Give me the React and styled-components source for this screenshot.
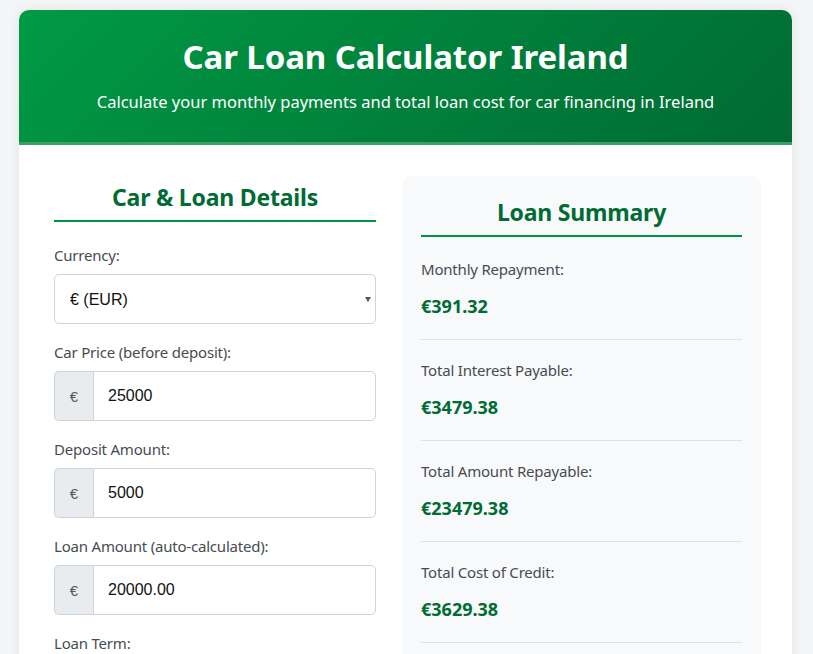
import styled, { createGlobalStyle } from "styled-components";

const Global = createGlobalStyle`
    body {
        margin: 0;
        background: #f4f5f6;
        font-family: "Noto Sans", "Open Sans", sans-serif;
    }
`;

const Page = styled.div`
    padding: 10px 21px 0 19px;
`;

const Card = styled.div`
    background: #fff;
    border-radius: 10px;
    box-shadow: 0 0 12px rgba(0, 0, 0, 0.08);
    overflow: hidden;
`;

const Header = styled.header`
    background: linear-gradient(135deg, #009a44 0%, #006a33 100%);
    color: #fff;
    text-align: center;
    padding: 25px 20px 28px;
    border-bottom: 3px solid #3d9e66;
`;

const Title = styled.h1`
    margin: 0;
    font-size: 33px;
    font-weight: 700;
    letter-spacing: -0.1px;
    line-height: 44px;
`;

const Subtitle = styled.p`
    margin: 11px 0 0;
    font-size: 16.5px;
    line-height: 24px;
`;

const Body = styled.div`
    display: grid;
    grid-template-columns: 322px 359px;
    column-gap: 26px;
    padding: 31px 31px 40px 35px;
    align-items: start;
`;

const Column = styled.section`
    padding-top: 5px;
`;

const Summary = styled.section`
    background: #f8f9fa;
    border-radius: 10px;
    padding: 20px 19px;
`;

const SectionTitle = styled.h2`
    margin: 0 0 ${p => p.gap}px;
    padding-bottom: 7px;
    border-bottom: 2px solid #009245;
    color: #006b35;
    font-size: 23px;
    font-weight: 700;
    text-align: center;
    line-height: 32px;
    letter-spacing: -0.2px;
`;

const Field = styled.div`
    margin-bottom: 18px;
`;

const Label = styled.label`
    display: block;
    color: #474c52;
    font-size: 15px;
    line-height: 20px;
    margin-bottom: 9px;
    letter-spacing: -0.2px;
`;

const SelectWrap = styled.div`
    position: relative;
    &::after {
        content: "";
        position: absolute;
        right: 5px;
        top: 23px;
        border-left: 3.5px solid transparent;
        border-right: 3.5px solid transparent;
        border-top: 5px solid #555;
        pointer-events: none;
    }
`;

const Select = styled.select`
    appearance: none;
    width: 100%;
    height: 50px;
    border: 1px solid #cfd3d8;
    border-radius: 5px;
    background: #fff;
    padding: 0 15px;
    font-family: "Liberation Sans", Arial, sans-serif;
    font-size: 16px;
    color: #111;
`;

const Group = styled.div`
    display: flex;
    height: 50px;
`;

const Prefix = styled.span`
    width: 38px;
    flex: none;
    display: flex;
    align-items: center;
    justify-content: center;
    background: #e9ecef;
    border: 1px solid #cfd3d8;
    border-right: none;
    border-radius: 5px 0 0 5px;
    color: #555;
    font-family: "Liberation Sans", Arial, sans-serif;
    font-size: 15px;
`;

const Input = styled.input`
    flex: 1;
    min-width: 0;
    border: 1px solid #cfd3d8;
    border-radius: 0 5px 5px 0;
    padding: 0 14px;
    font-family: "Liberation Sans", Arial, sans-serif;
    font-size: 16px;
    color: #111;
    background: #fff;
`;

const Item = styled.div`
    padding: 20px 0 21px;
    border-bottom: 1px solid #dee2e6;
    &:first-of-type { padding-top: 0; }
`;

const ItemLabel = styled.div`
    color: #474c52;
    font-size: 15px;
    line-height: 20px;
    letter-spacing: -0.2px;
`;

const ItemValue = styled.div`
    margin-top: 15px;
    color: #006b35;
    font-size: 18px;
    font-weight: 700;
    line-height: 24px;
`;

const fields = [
    { label: "Car Price (before deposit):", value: "25000" },
    { label: "Deposit Amount:", value: "5000" },
    { label: "Loan Amount (auto-calculated):", value: "20000.00" },
];

const results = [
    ["Monthly Repayment:", "€391.32"],
    ["Total Interest Payable:", "€3479.38"],
    ["Total Amount Repayable:", "€23479.38"],
    ["Total Cost of Credit:", "€3629.38"],
    ["APR:", "8.50%"],
];

export default function App() {
    return <>
        <Global />
        <Page>
            <Card>
                <Header>
                    <Title>Car Loan Calculator Ireland</Title>
                    <Subtitle>Calculate your monthly payments and total loan cost for car financing in Ireland</Subtitle>
                </Header>
                <Body>
                    <Column>
                        <SectionTitle gap={23}>Car &amp; Loan Details</SectionTitle>
                        <Field>
                            <Label>Currency:</Label>
                            <SelectWrap>
                                <Select defaultValue="EUR">
                                    <option value="EUR">€ (EUR)</option>
                                    <option value="GBP">£ (GBP)</option>
                                </Select>
                            </SelectWrap>
                        </Field>
                        {fields.map(f => (
                            <Field key={f.label}>
                                <Label>{f.label}</Label>
                                <Group>
                                    <Prefix>€</Prefix>
                                    <Input defaultValue={f.value} />
                                </Group>
                            </Field>
                        ))}
                        <Field>
                            <Label>Loan Term:</Label>
                            <SelectWrap>
                                <Select defaultValue="5">
                                    <option value="5">5 years</option>
                                </Select>
                            </SelectWrap>
                        </Field>
                    </Column>
                    <Summary>
                        <SectionTitle gap={22}>Loan Summary</SectionTitle>
                        {results.map(([l, v]) => (
                            <Item key={l}>
                                <ItemLabel>{l}</ItemLabel>
                                <ItemValue>{v}</ItemValue>
                            </Item>
                        ))}
                    </Summary>
                </Body>
            </Card>
        </Page>
    </>;
}
